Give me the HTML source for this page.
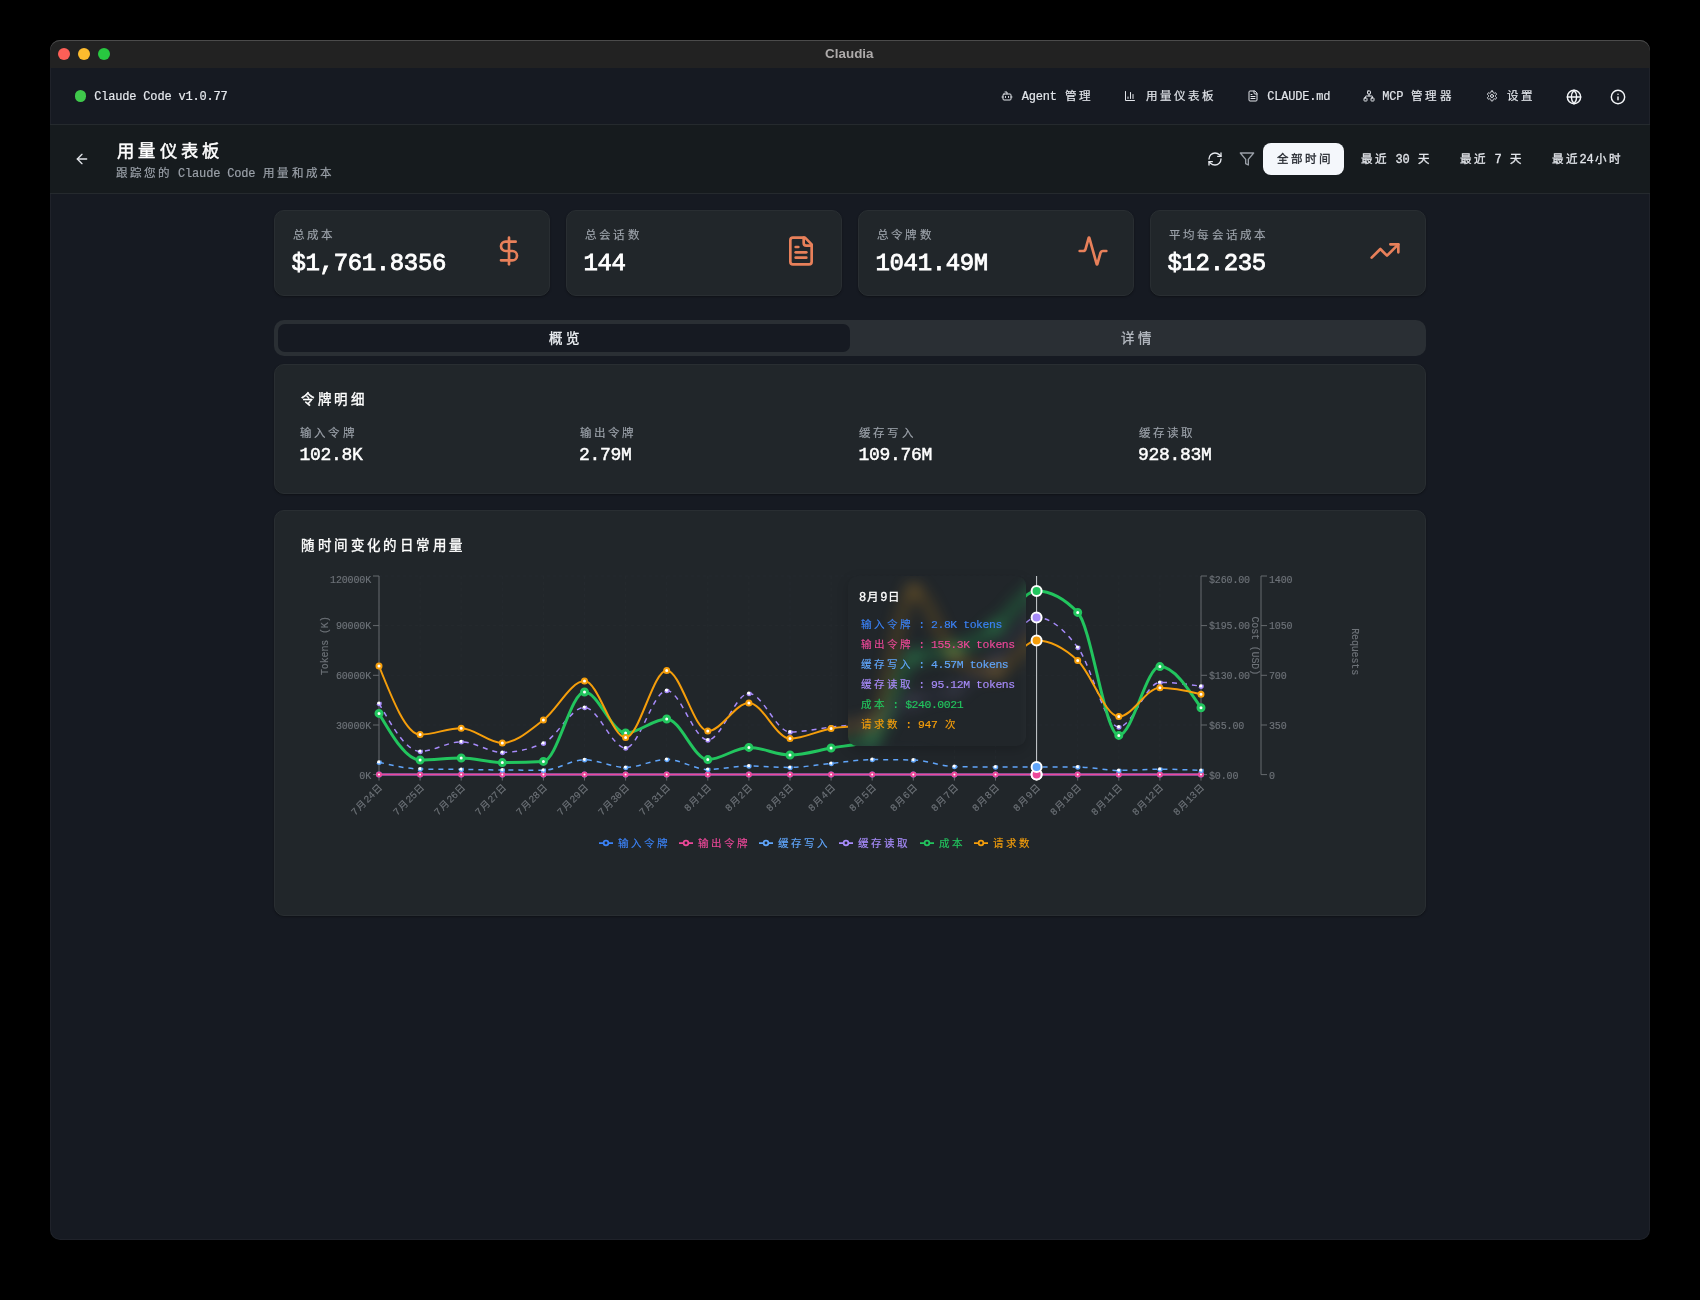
<!DOCTYPE html>
<html lang="zh-CN"><head><meta charset="utf-8"><title>Claudia</title><style>
html,body{margin:0;padding:0;background:#000;}
body{width:1700px;height:1300px;position:relative;overflow:hidden;font-family:"Liberation Mono",monospace;}
#app{position:absolute;left:0;top:0;width:1700px;height:1300px;will-change:transform;}
.win{position:absolute;left:50px;top:40px;width:1600px;height:1200px;border-radius:10px;background:#161a22;box-shadow:inset 0 0 0 1px rgba(255,255,255,.04);}
.b{position:absolute;box-sizing:border-box;}
.ic{position:absolute;display:block;overflow:visible;}
.chart{position:absolute;left:0;top:0;}
.title{position:absolute;transform:translateX(-50%);font:bold 13.4px/20px "Liberation Sans",sans-serif;color:#aeabab;white-space:nowrap;}
.t{position:absolute;white-space:nowrap;height:20px;line-height:20px;font-family:"Liberation Mono",monospace;--k:1.04;--ls:-0.039;font-size:calc(var(--f)*var(--k));letter-spacing:calc(var(--f)*var(--ls));}
.t .c{display:inline-block;width:calc(var(--f)*1.177);text-align:center;font-size:calc(var(--f)*.96);line-height:0;letter-spacing:0;}
.tip{position:absolute;border-radius:9px;background:#21262a;overflow:hidden;box-shadow:0 4px 12px rgba(0,0,0,.18);}
.blur{position:absolute;display:block;filter:blur(8px);opacity:1;}
</style></head><body>
<div id="app">
<div class="win"></div>
<div class="b" style="left:50px;top:40px;width:1600px;height:28px;background:#222222;border-radius:10px 10px 0 0;box-shadow:inset 0 1px 0 #4b4b4b;"></div>
<div class="b" style="left:58.2px;top:48.2px;width:12px;height:12px;border-radius:50%;background:#fe5f57;"></div>
<div class="b" style="left:78.2px;top:48.2px;width:12px;height:12px;border-radius:50%;background:#febc2e;"></div>
<div class="b" style="left:98.2px;top:48.2px;width:12px;height:12px;border-radius:50%;background:#28c840;"></div>
<div class="title" style="left:849.3px;top:44px;">Claudia</div>
<div class="b" style="left:50px;top:125px;width:1600px;height:68px;background:#161b1e;"></div>
<div class="b" style="left:50px;top:124px;width:1600px;height:1px;background:#252a2e;"></div>
<div class="b" style="left:74.6px;top:90.4px;width:11.6px;height:11.6px;border-radius:50%;background:#3fc84b;"></div>
<div class="t" style="left:94.20px;top:87.003px;--f:12px;color:#e6e9ee;--k:1;--ls:-0.015;-webkit-text-stroke:0.18px currentColor;">Claude Code v1.0.77</div>
<svg class="ic" style="left:1000.70px;top:90.20px" width="12" height="12" viewBox="0 0 24 24" fill="none" stroke="#e2e5ea" stroke-width="2" stroke-linecap="round" stroke-linejoin="round"><path d="M12 8V4H8"/><rect width="16" height="12" x="4" y="8" rx="2"/><path d="M2 14h2"/><path d="M20 14h2"/><path d="M15 13v2"/><path d="M9 13v2"/></svg>
<div class="t" style="left:1021.70px;top:87.003px;--f:12px;color:#e2e5ea;--k:1;--ls:-0.015;-webkit-text-stroke:0.18px currentColor;">Agent <span class="c">管</span><span class="c">理</span></div>
<svg class="ic" style="left:1124.00px;top:90.20px" width="12" height="12" viewBox="0 0 24 24" fill="none" stroke="#e2e5ea" stroke-width="2" stroke-linecap="round" stroke-linejoin="round"><path d="M3 3v18h18"/><path d="M18 17V9"/><path d="M13 17V5"/><path d="M8 17v-3"/></svg>
<div class="t" style="left:1144.60px;top:87.003px;--f:12px;color:#e2e5ea;--k:1;--ls:-0.015;-webkit-text-stroke:0.18px currentColor;"><span class="c">用</span><span class="c">量</span><span class="c">仪</span><span class="c">表</span><span class="c">板</span></div>
<svg class="ic" style="left:1246.70px;top:90.20px" width="12" height="12" viewBox="0 0 24 24" fill="none" stroke="#e2e5ea" stroke-width="2" stroke-linecap="round" stroke-linejoin="round"><path d="M15 2H6a2 2 0 0 0-2 2v16a2 2 0 0 0 2 2h12a2 2 0 0 0 2-2V7Z"/><path d="M14 2v4a2 2 0 0 0 2 2h4"/><path d="M10 9H8"/><path d="M16 13H8"/><path d="M16 17H8"/></svg>
<div class="t" style="left:1267.20px;top:87.003px;--f:12px;color:#e2e5ea;--k:1;--ls:-0.015;-webkit-text-stroke:0.18px currentColor;">CLAUDE.md</div>
<svg class="ic" style="left:1362.70px;top:90.20px" width="12" height="12" viewBox="0 0 24 24" fill="none" stroke="#e2e5ea" stroke-width="2" stroke-linecap="round" stroke-linejoin="round"><rect x="16" y="16" width="6" height="6" rx="1"/><rect x="2" y="16" width="6" height="6" rx="1"/><rect x="9" y="2" width="6" height="6" rx="1"/><path d="M5 16v-3a1 1 0 0 1 1-1h12a1 1 0 0 1 1 1v3"/><path d="M12 12V8"/></svg>
<div class="t" style="left:1382.20px;top:87.003px;--f:12px;color:#e2e5ea;--k:1;--ls:-0.015;-webkit-text-stroke:0.18px currentColor;">MCP <span class="c">管</span><span class="c">理</span><span class="c">器</span></div>
<svg class="ic" style="left:1485.80px;top:90.20px" width="12" height="12" viewBox="0 0 24 24" fill="none" stroke="#e2e5ea" stroke-width="2" stroke-linecap="round" stroke-linejoin="round"><path d="M12.22 2h-.44a2 2 0 0 0-2 2v.18a2 2 0 0 1-1 1.73l-.43.25a2 2 0 0 1-2 0l-.15-.08a2 2 0 0 0-2.73.73l-.22.38a2 2 0 0 0 .73 2.73l.15.1a2 2 0 0 1 1 1.72v.51a2 2 0 0 1-1 1.74l-.15.09a2 2 0 0 0-.73 2.73l.22.38a2 2 0 0 0 2.73.73l.15-.08a2 2 0 0 1 2 0l.43.25a2 2 0 0 1 1 1.73V20a2 2 0 0 0 2 2h.44a2 2 0 0 0 2-2v-.18a2 2 0 0 1 1-1.73l.43-.25a2 2 0 0 1 2 0l.15.08a2 2 0 0 0 2.73-.73l.22-.39a2 2 0 0 0-.73-2.73l-.15-.08a2 2 0 0 1-1-1.74v-.5a2 2 0 0 1 1-1.74l.15-.09a2 2 0 0 0 .73-2.73l-.22-.38a2 2 0 0 0-2.73-.73l-.15.08a2 2 0 0 1-2 0l-.43-.25a2 2 0 0 1-1-1.73V4a2 2 0 0 0-2-2z"/><circle cx="12" cy="12" r="3"/></svg>
<div class="t" style="left:1506.30px;top:87.003px;--f:12px;color:#e2e5ea;--k:1;--ls:-0.015;-webkit-text-stroke:0.18px currentColor;"><span class="c">设</span><span class="c">置</span></div>
<svg class="ic" style="left:1565.80px;top:88.60px" width="16" height="16" viewBox="0 0 24 24" fill="none" stroke="#f4f6f9" stroke-width="2.15" stroke-linecap="round" stroke-linejoin="round"><circle cx="12" cy="12" r="10"/><path d="M12 2a14.5 14.5 0 0 0 0 20 14.5 14.5 0 0 0 0-20"/><path d="M2 12h20"/></svg>
<svg class="ic" style="left:1610.00px;top:88.60px" width="16" height="16" viewBox="0 0 24 24" fill="none" stroke="#f4f6f9" stroke-width="2.15" stroke-linecap="round" stroke-linejoin="round"><circle cx="12" cy="12" r="10"/><path d="M12 16v-4"/><path d="M12 8h.01"/></svg>
<div class="b" style="left:50px;top:193px;width:1600px;height:1px;background:#252a2e;"></div>
<svg class="ic" style="left:74.20px;top:151.30px" width="16" height="16" viewBox="0 0 24 24" fill="none" stroke="#e2e5ea" stroke-width="2" stroke-linecap="round" stroke-linejoin="round"><path d="m12 19-7-7 7-7"/><path d="M19 12H5"/></svg>
<div class="t" style="left:115.20px;top:142.013px;--f:18px;color:#ffffff;--k:1;--ls:-0.015;-webkit-text-stroke:0.47px currentColor;"><span class="c">用</span><span class="c">量</span><span class="c">仪</span><span class="c">表</span><span class="c">板</span></div>
<div class="t" style="left:114.60px;top:164.003px;--f:12px;color:#9ba1a9;--k:1;--ls:-0.015;-webkit-text-stroke:0.18px currentColor;"><span class="c">跟</span><span class="c">踪</span><span class="c">您</span><span class="c">的</span> Claude Code <span class="c">用</span><span class="c">量</span><span class="c">和</span><span class="c">成</span><span class="c">本</span></div>
<svg class="ic" style="left:1207.00px;top:151.20px" width="16" height="16" viewBox="0 0 24 24" fill="none" stroke="#e6e9ee" stroke-width="2" stroke-linecap="round" stroke-linejoin="round"><path d="M3 12a9 9 0 0 1 9-9 9.75 9.75 0 0 1 6.74 2.74L21 8"/><path d="M21 3v5h-5"/><path d="M21 12a9 9 0 0 1-9 9 9.75 9.75 0 0 1-6.74-2.74L3 16"/><path d="M8 16H3v5"/></svg>
<svg class="ic" style="left:1239.00px;top:151.20px" width="16" height="16" viewBox="0 0 24 24" fill="none" stroke="#9aa0a8" stroke-width="2" stroke-linecap="round" stroke-linejoin="round"><polygon points="22 3 2 3 10 12.46 10 19 14 21 14 12.46 22 3"/></svg>
<div class="b" style="left:1263px;top:143px;width:81px;height:32px;background:#f4f7fb;border-radius:8px;"></div>
<div class="t" style="left:1275.90px;top:150.003px;--f:12px;color:#1f232a;--k:1;--ls:-0.015;-webkit-text-stroke:0.29px currentColor;"><span class="c">全</span><span class="c">部</span><span class="c">时</span><span class="c">间</span></div>
<div class="t" style="left:1360.20px;top:150.003px;--f:12px;color:#e2e5ea;--k:1;--ls:-0.015;-webkit-text-stroke:0.29px currentColor;"><span class="c">最</span><span class="c">近</span> 30 <span class="c">天</span></div>
<div class="t" style="left:1459.30px;top:150.003px;--f:12px;color:#e2e5ea;--k:1;--ls:-0.015;-webkit-text-stroke:0.29px currentColor;"><span class="c">最</span><span class="c">近</span> 7 <span class="c">天</span></div>
<div class="t" style="left:1551.20px;top:150.003px;--f:12px;color:#e2e5ea;--k:1;--ls:-0.015;-webkit-text-stroke:0.29px currentColor;"><span class="c">最</span><span class="c">近</span>24<span class="c">小</span><span class="c">时</span></div>
<div class="b" style="left:274px;top:210px;width:276px;height:86px;background:#21262a;border:1px solid #292e32;border-radius:10px;box-shadow:0 1px 2px rgba(0,0,0,.35);"></div>
<div class="t" style="left:292.20px;top:226.003px;--f:12px;color:#9ba1a9;--k:1;--ls:-0.015;-webkit-text-stroke:0.18px currentColor;"><span class="c">总</span><span class="c">成</span><span class="c">本</span></div>
<div class="t" style="left:291.50px;top:254.007px;--f:24px;color:#ffffff;--k:1;--ls:-0.015;-webkit-text-stroke:0.82px currentColor;">$1,761.8356</div>
<svg class="ic" style="left:493.00px;top:235.00px" width="32" height="32" viewBox="0 0 24 24" fill="none" stroke="#e8805a" stroke-width="2" stroke-linecap="round" stroke-linejoin="round"><line x1="12" x2="12" y1="2" y2="22"/><path d="M17 5H9.5a3.5 3.5 0 0 0 0 7h5a3.5 3.5 0 0 1 0 7H6"/></svg>
<div class="b" style="left:566px;top:210px;width:276px;height:86px;background:#21262a;border:1px solid #292e32;border-radius:10px;box-shadow:0 1px 2px rgba(0,0,0,.35);"></div>
<div class="t" style="left:584.20px;top:226.003px;--f:12px;color:#9ba1a9;--k:1;--ls:-0.015;-webkit-text-stroke:0.18px currentColor;"><span class="c">总</span><span class="c">会</span><span class="c">话</span><span class="c">数</span></div>
<div class="t" style="left:583.50px;top:254.007px;--f:24px;color:#ffffff;--k:1;--ls:-0.015;-webkit-text-stroke:0.82px currentColor;">144</div>
<svg class="ic" style="left:785.00px;top:235.00px" width="32" height="32" viewBox="0 0 24 24" fill="none" stroke="#e8805a" stroke-width="2" stroke-linecap="round" stroke-linejoin="round"><path d="M15 2H6a2 2 0 0 0-2 2v16a2 2 0 0 0 2 2h12a2 2 0 0 0 2-2V7Z"/><path d="M14 2v4a2 2 0 0 0 2 2h4"/><path d="M10 9H8"/><path d="M16 13H8"/><path d="M16 17H8"/></svg>
<div class="b" style="left:858px;top:210px;width:276px;height:86px;background:#21262a;border:1px solid #292e32;border-radius:10px;box-shadow:0 1px 2px rgba(0,0,0,.35);"></div>
<div class="t" style="left:876.20px;top:226.003px;--f:12px;color:#9ba1a9;--k:1;--ls:-0.015;-webkit-text-stroke:0.18px currentColor;"><span class="c">总</span><span class="c">令</span><span class="c">牌</span><span class="c">数</span></div>
<div class="t" style="left:875.50px;top:254.007px;--f:24px;color:#ffffff;--k:1;--ls:-0.015;-webkit-text-stroke:0.82px currentColor;">1041.49M</div>
<svg class="ic" style="left:1077.00px;top:235.00px" width="32" height="32" viewBox="0 0 24 24" fill="none" stroke="#e8805a" stroke-width="2" stroke-linecap="round" stroke-linejoin="round"><path d="M22 12h-2.48a2 2 0 0 0-1.93 1.46l-2.35 8.36a.25.25 0 0 1-.48 0L9.24 2.18a.25.25 0 0 0-.48 0l-2.35 8.36A2 2 0 0 1 4.49 12H2"/></svg>
<div class="b" style="left:1150px;top:210px;width:276px;height:86px;background:#21262a;border:1px solid #292e32;border-radius:10px;box-shadow:0 1px 2px rgba(0,0,0,.35);"></div>
<div class="t" style="left:1168.20px;top:226.003px;--f:12px;color:#9ba1a9;--k:1;--ls:-0.015;-webkit-text-stroke:0.18px currentColor;"><span class="c">平</span><span class="c">均</span><span class="c">每</span><span class="c">会</span><span class="c">话</span><span class="c">成</span><span class="c">本</span></div>
<div class="t" style="left:1167.50px;top:254.007px;--f:24px;color:#ffffff;--k:1;--ls:-0.015;-webkit-text-stroke:0.82px currentColor;">$12.235</div>
<svg class="ic" style="left:1369.00px;top:235.00px" width="32" height="32" viewBox="0 0 24 24" fill="none" stroke="#e8805a" stroke-width="2" stroke-linecap="round" stroke-linejoin="round"><polyline points="22 7 13.5 15.5 8.5 10.5 2 17"/><polyline points="16 7 22 7 22 13"/></svg>
<div class="b" style="left:274px;top:320px;width:1152px;height:36px;background:#2a2f34;border-radius:10px;"></div>
<div class="b" style="left:278px;top:324px;width:572px;height:28px;background:#161a22;border-radius:7px;"></div>
<div class="t" style="left:564.00px;top:329.008px;--f:14px;color:#eef1f5;-webkit-text-stroke:0.34px currentColor;transform:translateX(-50%);"><span class="c">概</span><span class="c">览</span></div>
<div class="t" style="left:1136.00px;top:329.008px;--f:14px;color:#b4b9c0;-webkit-text-stroke:0.34px currentColor;transform:translateX(-50%);"><span class="c">详</span><span class="c">情</span></div>
<div class="b" style="left:274px;top:364px;width:1152px;height:130px;background:#21262a;border:1px solid #292e32;border-radius:10px;box-shadow:0 1px 2px rgba(0,0,0,.35);"></div>
<div class="t" style="left:299.40px;top:390.001px;--f:14px;color:#ffffff;--k:1;--ls:-0.015;-webkit-text-stroke:0.36px currentColor;"><span class="c">令</span><span class="c">牌</span><span class="c">明</span><span class="c">细</span></div>
<div class="t" style="left:299.20px;top:424.003px;--f:12px;color:#9ba1a9;--k:1;--ls:-0.015;-webkit-text-stroke:0.18px currentColor;"><span class="c">输</span><span class="c">入</span><span class="c">令</span><span class="c">牌</span></div>
<div class="t" style="left:299.40px;top:445.013px;--f:18px;color:#ffffff;--k:1;--ls:-0.015;-webkit-text-stroke:0.47px currentColor;">102.8K</div>
<div class="t" style="left:578.70px;top:424.003px;--f:12px;color:#9ba1a9;--k:1;--ls:-0.015;-webkit-text-stroke:0.18px currentColor;"><span class="c">输</span><span class="c">出</span><span class="c">令</span><span class="c">牌</span></div>
<div class="t" style="left:578.90px;top:445.013px;--f:18px;color:#ffffff;--k:1;--ls:-0.015;-webkit-text-stroke:0.47px currentColor;">2.79M</div>
<div class="t" style="left:858.20px;top:424.003px;--f:12px;color:#9ba1a9;--k:1;--ls:-0.015;-webkit-text-stroke:0.18px currentColor;"><span class="c">缓</span><span class="c">存</span><span class="c">写</span><span class="c">入</span></div>
<div class="t" style="left:858.40px;top:445.013px;--f:18px;color:#ffffff;--k:1;--ls:-0.015;-webkit-text-stroke:0.47px currentColor;">109.76M</div>
<div class="t" style="left:1137.70px;top:424.003px;--f:12px;color:#9ba1a9;--k:1;--ls:-0.015;-webkit-text-stroke:0.18px currentColor;"><span class="c">缓</span><span class="c">存</span><span class="c">读</span><span class="c">取</span></div>
<div class="t" style="left:1137.90px;top:445.013px;--f:18px;color:#ffffff;--k:1;--ls:-0.015;-webkit-text-stroke:0.47px currentColor;">928.83M</div>
<div class="b" style="left:274px;top:510px;width:1152px;height:406px;background:#21262a;border:1px solid #292e32;border-radius:10px;box-shadow:0 1px 2px rgba(0,0,0,.35);"></div>
<div class="t" style="left:299.40px;top:536.001px;--f:14px;color:#ffffff;--k:1;--ls:-0.015;-webkit-text-stroke:0.36px currentColor;"><span class="c">随</span><span class="c">时</span><span class="c">间</span><span class="c">变</span><span class="c">化</span><span class="c">的</span><span class="c">日</span><span class="c">常</span><span class="c">用</span><span class="c">量</span></div>
<svg class="chart" width="1700" height="1300" viewBox="0 0 1700 1300" fill="none"><g stroke="#2a2f34" stroke-width="1" stroke-dasharray="3 3" opacity="0.4"><path d="M379.0 576.0H1201.0"/><path d="M379.0 625.6H1201.0"/><path d="M379.0 675.3H1201.0"/><path d="M379.0 725.0H1201.0"/><path d="M379.0 774.6H1201.0"/><path d="M379.0 576.0V774.6"/><path d="M420.1 576.0V774.6"/><path d="M461.2 576.0V774.6"/><path d="M502.3 576.0V774.6"/><path d="M543.4 576.0V774.6"/><path d="M584.5 576.0V774.6"/><path d="M625.6 576.0V774.6"/><path d="M666.7 576.0V774.6"/><path d="M707.8 576.0V774.6"/><path d="M748.9 576.0V774.6"/><path d="M790.0 576.0V774.6"/><path d="M831.1 576.0V774.6"/><path d="M872.2 576.0V774.6"/><path d="M913.3 576.0V774.6"/><path d="M954.4 576.0V774.6"/><path d="M995.5 576.0V774.6"/><path d="M1036.6 576.0V774.6"/><path d="M1077.7 576.0V774.6"/><path d="M1118.8 576.0V774.6"/><path d="M1159.9 576.0V774.6"/><path d="M1201.0 576.0V774.6"/></g><g stroke="#666a6e" stroke-width="1"><path d="M379.0 576.0V774.6"/><path d="M1201.0 576.0V774.6"/><path d="M1261.0 576.0V774.6"/><path d="M379.0 576.0h-6"/><path d="M1201.0 576.0h6"/><path d="M1261.0 576.0h6"/><path d="M379.0 625.6h-6"/><path d="M1201.0 625.6h6"/><path d="M1261.0 625.6h6"/><path d="M379.0 675.3h-6"/><path d="M1201.0 675.3h6"/><path d="M1261.0 675.3h6"/><path d="M379.0 725.0h-6"/><path d="M1201.0 725.0h6"/><path d="M1261.0 725.0h6"/><path d="M379.0 774.6h-6"/><path d="M1201.0 774.6h6"/><path d="M1261.0 774.6h6"/><path d="M379.0 774.6v6"/><path d="M420.1 774.6v6"/><path d="M461.2 774.6v6"/><path d="M502.3 774.6v6"/><path d="M543.4 774.6v6"/><path d="M584.5 774.6v6"/><path d="M625.6 774.6v6"/><path d="M666.7 774.6v6"/><path d="M707.8 774.6v6"/><path d="M748.9 774.6v6"/><path d="M790.0 774.6v6"/><path d="M831.1 774.6v6"/><path d="M872.2 774.6v6"/><path d="M913.3 774.6v6"/><path d="M954.4 774.6v6"/><path d="M995.5 774.6v6"/><path d="M1036.6 774.6v6"/><path d="M1077.7 774.6v6"/><path d="M1118.8 774.6v6"/><path d="M1159.9 774.6v6"/><path d="M1201.0 774.6v6"/></g><path d="M1036.6 576.0V774.6" stroke="#cfd2d6" stroke-width="1"/><path d="M379.00,774.60C392.70,774.60,406.40,774.60,420.10,774.60C433.80,774.60,447.50,774.60,461.20,774.60C474.90,774.60,488.60,774.60,502.30,774.60C516.00,774.60,529.70,774.60,543.40,774.60C557.10,774.60,570.80,774.60,584.50,774.60C598.20,774.60,611.90,774.60,625.60,774.60C639.30,774.60,653.00,774.60,666.70,774.60C680.40,774.60,694.10,774.60,707.80,774.60C721.50,774.60,735.20,774.60,748.90,774.60C762.60,774.60,776.30,774.60,790.00,774.60C803.70,774.60,817.40,774.60,831.10,774.60C844.80,774.60,858.50,774.60,872.20,774.60C885.90,774.60,899.60,774.60,913.30,774.60C927.00,774.60,940.70,774.60,954.40,774.60C968.10,774.60,981.80,774.60,995.50,774.60C1009.20,774.60,1022.90,774.60,1036.60,774.60C1050.30,774.60,1064.00,774.60,1077.70,774.60C1091.40,774.60,1105.10,774.60,1118.80,774.60C1132.50,774.60,1146.20,774.60,1159.90,774.60C1173.60,774.60,1187.30,774.60,1201.00,774.60" stroke="#3b82f6" stroke-width="2" stroke-linecap="butt"/><g fill="#fff" stroke="#3b82f6" stroke-width="2"><circle cx="379.0" cy="774.6" r="2"/><circle cx="420.1" cy="774.6" r="2"/><circle cx="461.2" cy="774.6" r="2"/><circle cx="502.3" cy="774.6" r="2"/><circle cx="543.4" cy="774.6" r="2"/><circle cx="584.5" cy="774.6" r="2"/><circle cx="625.6" cy="774.6" r="2"/><circle cx="666.7" cy="774.6" r="2"/><circle cx="707.8" cy="774.6" r="2"/><circle cx="748.9" cy="774.6" r="2"/><circle cx="790.0" cy="774.6" r="2"/><circle cx="831.1" cy="774.6" r="2"/><circle cx="872.2" cy="774.6" r="2"/><circle cx="913.3" cy="774.6" r="2"/><circle cx="954.4" cy="774.6" r="2"/><circle cx="995.5" cy="774.6" r="2"/><circle cx="1036.6" cy="774.6" r="2"/><circle cx="1077.7" cy="774.6" r="2"/><circle cx="1118.8" cy="774.6" r="2"/><circle cx="1159.9" cy="774.6" r="2"/><circle cx="1201.0" cy="774.6" r="2"/></g><path d="M379.00,774.40C392.70,774.40,406.40,774.40,420.10,774.40C433.80,774.40,447.50,774.40,461.20,774.40C474.90,774.40,488.60,774.40,502.30,774.40C516.00,774.40,529.70,774.40,543.40,774.40C557.10,774.40,570.80,774.40,584.50,774.40C598.20,774.40,611.90,774.40,625.60,774.40C639.30,774.40,653.00,774.40,666.70,774.40C680.40,774.40,694.10,774.40,707.80,774.40C721.50,774.40,735.20,774.40,748.90,774.40C762.60,774.40,776.30,774.40,790.00,774.40C803.70,774.40,817.40,774.40,831.10,774.40C844.80,774.40,858.50,774.40,872.20,774.40C885.90,774.40,899.60,774.40,913.30,774.40C927.00,774.40,940.70,774.40,954.40,774.40C968.10,774.40,981.80,774.40,995.50,774.40C1009.20,774.40,1022.90,774.40,1036.60,774.40C1050.30,774.40,1064.00,774.40,1077.70,774.40C1091.40,774.40,1105.10,774.40,1118.80,774.40C1132.50,774.40,1146.20,774.40,1159.90,774.40C1173.60,774.40,1187.30,774.40,1201.00,774.40" stroke="#ec4899" stroke-width="2" stroke-linecap="butt"/><g fill="#fff" stroke="#ec4899" stroke-width="2"><circle cx="379.0" cy="774.4" r="2"/><circle cx="420.1" cy="774.4" r="2"/><circle cx="461.2" cy="774.4" r="2"/><circle cx="502.3" cy="774.4" r="2"/><circle cx="543.4" cy="774.4" r="2"/><circle cx="584.5" cy="774.4" r="2"/><circle cx="625.6" cy="774.4" r="2"/><circle cx="666.7" cy="774.4" r="2"/><circle cx="707.8" cy="774.4" r="2"/><circle cx="748.9" cy="774.4" r="2"/><circle cx="790.0" cy="774.4" r="2"/><circle cx="831.1" cy="774.4" r="2"/><circle cx="872.2" cy="774.4" r="2"/><circle cx="913.3" cy="774.4" r="2"/><circle cx="954.4" cy="774.4" r="2"/><circle cx="995.5" cy="774.4" r="2"/><circle cx="1036.6" cy="774.4" r="2"/><circle cx="1077.7" cy="774.4" r="2"/><circle cx="1118.8" cy="774.4" r="2"/><circle cx="1159.9" cy="774.4" r="2"/><circle cx="1201.0" cy="774.4" r="2"/></g><path d="M379.00,762.20C392.70,765.47,406.40,768.73,420.10,769.00C433.80,769.27,447.50,769.23,461.20,769.40C474.90,769.57,488.60,769.87,502.30,770.00C516.00,770.13,529.70,770.20,543.40,770.20C557.10,770.20,570.80,759.80,584.50,759.80C598.20,759.80,611.90,767.40,625.60,767.40C639.30,767.40,653.00,759.40,666.70,759.40C680.40,759.40,694.10,769.40,707.80,769.40C721.50,769.40,735.20,766.00,748.90,766.00C762.60,766.00,776.30,767.40,790.00,767.40C803.70,767.40,817.40,764.70,831.10,763.40C844.80,762.10,858.50,759.60,872.20,759.60C885.90,759.60,899.60,759.73,913.30,760.00C927.00,760.27,940.70,766.33,954.40,766.60C968.10,766.87,981.80,767.00,995.50,767.00C1009.20,767.00,1022.90,767.00,1036.60,767.00C1050.30,767.00,1064.00,767.00,1077.70,767.00C1091.40,767.00,1105.10,770.40,1118.80,770.40C1132.50,770.40,1146.20,769.20,1159.90,769.20C1173.60,769.20,1187.30,769.80,1201.00,770.40" stroke="#60a5fa" stroke-width="1.5" stroke-dasharray="5 5" stroke-linecap="butt"/><g fill="#fff" stroke="#60a5fa" stroke-width="1.5" stroke-dasharray="5 5"><circle cx="379.0" cy="762.2" r="2"/><circle cx="420.1" cy="769.0" r="2"/><circle cx="461.2" cy="769.4" r="2"/><circle cx="502.3" cy="770.0" r="2"/><circle cx="543.4" cy="770.2" r="2"/><circle cx="584.5" cy="759.8" r="2"/><circle cx="625.6" cy="767.4" r="2"/><circle cx="666.7" cy="759.4" r="2"/><circle cx="707.8" cy="769.4" r="2"/><circle cx="748.9" cy="766.0" r="2"/><circle cx="790.0" cy="767.4" r="2"/><circle cx="831.1" cy="763.4" r="2"/><circle cx="872.2" cy="759.6" r="2"/><circle cx="913.3" cy="760.0" r="2"/><circle cx="954.4" cy="766.6" r="2"/><circle cx="995.5" cy="767.0" r="2"/><circle cx="1036.6" cy="767.0" r="2"/><circle cx="1077.7" cy="767.0" r="2"/><circle cx="1118.8" cy="770.4" r="2"/><circle cx="1159.9" cy="769.2" r="2"/><circle cx="1201.0" cy="770.4" r="2"/></g><path d="M379.00,703.40C392.70,727.40,406.40,751.40,420.10,751.40C433.80,751.40,447.50,741.80,461.20,741.80C474.90,741.80,488.60,752.40,502.30,752.40C516.00,752.40,529.70,749.33,543.40,743.20C557.10,737.07,570.80,707.40,584.50,707.40C598.20,707.40,611.90,748.00,625.60,748.00C639.30,748.00,653.00,690.60,666.70,690.60C680.40,690.60,694.10,740.00,707.80,740.00C721.50,740.00,735.20,693.40,748.90,693.40C762.60,693.40,776.30,732.00,790.00,732.00C803.70,732.00,817.40,728.67,831.10,727.00C844.80,725.33,858.50,725.33,872.20,722.00C885.90,718.67,899.60,705.33,913.30,700.00C927.00,694.67,940.70,696.67,954.40,690.00C968.10,683.33,981.80,672.10,995.50,660.00C1009.20,647.90,1022.90,617.40,1036.60,617.40C1050.30,617.40,1064.00,629.13,1077.70,647.40C1091.40,665.67,1105.10,727.00,1118.80,727.00C1132.50,727.00,1146.20,682.40,1159.90,682.40C1173.60,682.40,1187.30,684.30,1201.00,686.20" stroke="#a78bfa" stroke-width="1.5" stroke-dasharray="5 5" stroke-linecap="butt"/><g fill="#fff" stroke="#a78bfa" stroke-width="1.5" stroke-dasharray="5 5"><circle cx="379.0" cy="703.4" r="2"/><circle cx="420.1" cy="751.4" r="2"/><circle cx="461.2" cy="741.8" r="2"/><circle cx="502.3" cy="752.4" r="2"/><circle cx="543.4" cy="743.2" r="2"/><circle cx="584.5" cy="707.4" r="2"/><circle cx="625.6" cy="748.0" r="2"/><circle cx="666.7" cy="690.6" r="2"/><circle cx="707.8" cy="740.0" r="2"/><circle cx="748.9" cy="693.4" r="2"/><circle cx="790.0" cy="732.0" r="2"/><circle cx="831.1" cy="727.0" r="2"/><circle cx="872.2" cy="722.0" r="2"/><circle cx="913.3" cy="700.0" r="2"/><circle cx="954.4" cy="690.0" r="2"/><circle cx="995.5" cy="660.0" r="2"/><circle cx="1036.6" cy="617.4" r="2"/><circle cx="1077.7" cy="647.4" r="2"/><circle cx="1118.8" cy="727.0" r="2"/><circle cx="1159.9" cy="682.4" r="2"/><circle cx="1201.0" cy="686.2" r="2"/></g><path d="M379.00,713.40C392.70,736.70,406.40,760.00,420.10,760.00C433.80,760.00,447.50,758.00,461.20,758.00C474.90,758.00,488.60,762.60,502.30,762.60C516.00,762.60,529.70,762.20,543.40,761.40C557.10,760.60,570.80,692.00,584.50,692.00C598.20,692.00,611.90,733.00,625.60,733.00C639.30,733.00,653.00,719.00,666.70,719.00C680.40,719.00,694.10,759.60,707.80,759.60C721.50,759.60,735.20,747.40,748.90,747.40C762.60,747.40,776.30,755.00,790.00,755.00C803.70,755.00,817.40,750.50,831.10,748.00C844.80,745.50,858.50,745.33,872.20,740.00C885.90,734.67,899.60,661.67,913.30,657.00C927.00,652.33,940.70,654.67,954.40,650.00C968.10,645.33,981.80,637.83,995.50,628.00C1009.20,618.17,1022.90,591.00,1036.60,591.00C1050.30,591.00,1064.00,598.13,1077.70,612.40C1091.40,626.67,1105.10,735.40,1118.80,735.40C1132.50,735.40,1146.20,666.60,1159.90,666.60C1173.60,666.60,1187.30,687.20,1201.00,707.80" stroke="#22c55e" stroke-width="3" stroke-linecap="butt"/><g fill="#fff" stroke="#22c55e" stroke-width="3"><circle cx="379.0" cy="713.4" r="3"/><circle cx="420.1" cy="760.0" r="3"/><circle cx="461.2" cy="758.0" r="3"/><circle cx="502.3" cy="762.6" r="3"/><circle cx="543.4" cy="761.4" r="3"/><circle cx="584.5" cy="692.0" r="3"/><circle cx="625.6" cy="733.0" r="3"/><circle cx="666.7" cy="719.0" r="3"/><circle cx="707.8" cy="759.6" r="3"/><circle cx="748.9" cy="747.4" r="3"/><circle cx="790.0" cy="755.0" r="3"/><circle cx="831.1" cy="748.0" r="3"/><circle cx="872.2" cy="740.0" r="3"/><circle cx="913.3" cy="657.0" r="3"/><circle cx="954.4" cy="650.0" r="3"/><circle cx="995.5" cy="628.0" r="3"/><circle cx="1036.6" cy="591.0" r="3"/><circle cx="1077.7" cy="612.4" r="3"/><circle cx="1118.8" cy="735.4" r="3"/><circle cx="1159.9" cy="666.6" r="3"/><circle cx="1201.0" cy="707.8" r="3"/></g><path d="M379.00,666.00C392.70,700.30,406.40,734.60,420.10,734.60C433.80,734.60,447.50,728.20,461.20,728.20C474.90,728.20,488.60,743.00,502.30,743.00C516.00,743.00,529.70,730.33,543.40,720.00C557.10,709.67,570.80,681.00,584.50,681.00C598.20,681.00,611.90,737.60,625.60,737.60C639.30,737.60,653.00,670.40,666.70,670.40C680.40,670.40,694.10,731.00,707.80,731.00C721.50,731.00,735.20,703.00,748.90,703.00C762.60,703.00,776.30,738.60,790.00,738.60C803.70,738.60,817.40,730.83,831.10,728.40C844.80,725.97,858.50,726.93,872.20,724.00C885.90,721.07,899.60,590.00,913.30,590.00C927.00,590.00,940.70,643.67,954.40,655.00C968.10,666.33,981.80,672.00,995.50,672.00C1009.20,672.00,1022.90,640.40,1036.60,640.40C1050.30,640.40,1064.00,647.70,1077.70,660.40C1091.40,673.10,1105.10,716.60,1118.80,716.60C1132.50,716.60,1146.20,687.80,1159.90,687.80C1173.60,687.80,1187.30,691.00,1201.00,694.20" stroke="#f59e0b" stroke-width="2" stroke-linecap="butt"/><g fill="#fff" stroke="#f59e0b" stroke-width="2"><circle cx="379.0" cy="666.0" r="2.5"/><circle cx="420.1" cy="734.6" r="2.5"/><circle cx="461.2" cy="728.2" r="2.5"/><circle cx="502.3" cy="743.0" r="2.5"/><circle cx="543.4" cy="720.0" r="2.5"/><circle cx="584.5" cy="681.0" r="2.5"/><circle cx="625.6" cy="737.6" r="2.5"/><circle cx="666.7" cy="670.4" r="2.5"/><circle cx="707.8" cy="731.0" r="2.5"/><circle cx="748.9" cy="703.0" r="2.5"/><circle cx="790.0" cy="738.6" r="2.5"/><circle cx="831.1" cy="728.4" r="2.5"/><circle cx="872.2" cy="724.0" r="2.5"/><circle cx="913.3" cy="590.0" r="2.5"/><circle cx="954.4" cy="655.0" r="2.5"/><circle cx="995.5" cy="672.0" r="2.5"/><circle cx="1036.6" cy="640.4" r="2.5"/><circle cx="1077.7" cy="660.4" r="2.5"/><circle cx="1118.8" cy="716.6" r="2.5"/><circle cx="1159.9" cy="687.8" r="2.5"/><circle cx="1201.0" cy="694.2" r="2.5"/></g><circle cx="1036.6" cy="774.6" r="5" fill="#3b82f6" stroke="#fff" stroke-width="2"/><circle cx="1036.6" cy="774.4" r="5" fill="#ec4899" stroke="#fff" stroke-width="2"/><circle cx="1036.6" cy="767.0" r="5" fill="#60a5fa" stroke="#fff" stroke-width="2"/><circle cx="1036.6" cy="617.4" r="5" fill="#a78bfa" stroke="#fff" stroke-width="2"/><circle cx="1036.6" cy="591.0" r="5" fill="#22c55e" stroke="#fff" stroke-width="2"/><circle cx="1036.6" cy="640.4" r="5" fill="#f59e0b" stroke="#fff" stroke-width="2"/></svg>
<div class="t" style="left:371.00px;top:570.602px;--f:10px;color:#6e7379;--k:1;--ls:-0.015;-webkit-text-stroke:0.15px currentColor;transform:translateX(-100%);">120000K</div>
<div class="t" style="left:1209.00px;top:570.602px;--f:10px;color:#6e7379;--k:1;--ls:-0.015;-webkit-text-stroke:0.15px currentColor;">$260.00</div>
<div class="t" style="left:1269.00px;top:570.602px;--f:10px;color:#6e7379;--k:1;--ls:-0.015;-webkit-text-stroke:0.15px currentColor;">1400</div>
<div class="t" style="left:371.00px;top:617.215px;--f:10px;color:#6e7379;--k:1;--ls:-0.015;-webkit-text-stroke:0.15px currentColor;transform:translateX(-100%);">90000K</div>
<div class="t" style="left:1209.00px;top:617.215px;--f:10px;color:#6e7379;--k:1;--ls:-0.015;-webkit-text-stroke:0.15px currentColor;">$195.00</div>
<div class="t" style="left:1269.00px;top:617.215px;--f:10px;color:#6e7379;--k:1;--ls:-0.015;-webkit-text-stroke:0.15px currentColor;">1050</div>
<div class="t" style="left:371.00px;top:666.852px;--f:10px;color:#6e7379;--k:1;--ls:-0.015;-webkit-text-stroke:0.15px currentColor;transform:translateX(-100%);">60000K</div>
<div class="t" style="left:1209.00px;top:666.852px;--f:10px;color:#6e7379;--k:1;--ls:-0.015;-webkit-text-stroke:0.15px currentColor;">$130.00</div>
<div class="t" style="left:1269.00px;top:666.852px;--f:10px;color:#6e7379;--k:1;--ls:-0.015;-webkit-text-stroke:0.15px currentColor;">700</div>
<div class="t" style="left:371.00px;top:716.505px;--f:10px;color:#6e7379;--k:1;--ls:-0.015;-webkit-text-stroke:0.15px currentColor;transform:translateX(-100%);">30000K</div>
<div class="t" style="left:1209.00px;top:716.505px;--f:10px;color:#6e7379;--k:1;--ls:-0.015;-webkit-text-stroke:0.15px currentColor;">$65.00</div>
<div class="t" style="left:1269.00px;top:716.505px;--f:10px;color:#6e7379;--k:1;--ls:-0.015;-webkit-text-stroke:0.15px currentColor;">350</div>
<div class="t" style="left:371.00px;top:766.755px;--f:10px;color:#6e7379;--k:1;--ls:-0.015;-webkit-text-stroke:0.15px currentColor;transform:translateX(-100%);">0K</div>
<div class="t" style="left:1209.00px;top:766.755px;--f:10px;color:#6e7379;--k:1;--ls:-0.015;-webkit-text-stroke:0.15px currentColor;">$0.00</div>
<div class="t" style="left:1269.00px;top:766.755px;--f:10px;color:#6e7379;--k:1;--ls:-0.015;-webkit-text-stroke:0.15px currentColor;">0</div>
<div class="t" style="left:327.50px;top:663.312px;--f:10px;color:#6e7379;--k:1;--ls:-0.015;-webkit-text-stroke:0.15px currentColor;transform:rotate(-90deg);transform-origin:0 11.988px;">Tokens (K)</div>
<div class="t" style="left:1252.00px;top:663.312px;--f:10px;color:#6e7379;--k:1;--ls:-0.015;-webkit-text-stroke:0.15px currentColor;transform:translateX(-100%) rotate(90deg);transform-origin:100% 11.988px;">Cost (USD)</div>
<div class="t" style="left:1352.30px;top:663.312px;--f:10px;color:#6e7379;--k:1;--ls:-0.015;-webkit-text-stroke:0.15px currentColor;transform:translateX(-100%) rotate(90deg);transform-origin:100% 11.988px;">Requests</div>
<div class="t" style="left:384.40px;top:775.408px;--f:10px;color:#6e7379;--k:1;--ls:-0.015;-webkit-text-stroke:0.15px currentColor;transform:translateX(-100%) rotate(-45deg);transform-origin:100% 11.992px;">7<span class="c">月</span>24<span class="c">日</span></div>
<div class="t" style="left:425.50px;top:775.408px;--f:10px;color:#6e7379;--k:1;--ls:-0.015;-webkit-text-stroke:0.15px currentColor;transform:translateX(-100%) rotate(-45deg);transform-origin:100% 11.992px;">7<span class="c">月</span>25<span class="c">日</span></div>
<div class="t" style="left:466.60px;top:775.408px;--f:10px;color:#6e7379;--k:1;--ls:-0.015;-webkit-text-stroke:0.15px currentColor;transform:translateX(-100%) rotate(-45deg);transform-origin:100% 11.992px;">7<span class="c">月</span>26<span class="c">日</span></div>
<div class="t" style="left:507.70px;top:775.408px;--f:10px;color:#6e7379;--k:1;--ls:-0.015;-webkit-text-stroke:0.15px currentColor;transform:translateX(-100%) rotate(-45deg);transform-origin:100% 11.992px;">7<span class="c">月</span>27<span class="c">日</span></div>
<div class="t" style="left:548.80px;top:775.408px;--f:10px;color:#6e7379;--k:1;--ls:-0.015;-webkit-text-stroke:0.15px currentColor;transform:translateX(-100%) rotate(-45deg);transform-origin:100% 11.992px;">7<span class="c">月</span>28<span class="c">日</span></div>
<div class="t" style="left:589.90px;top:775.408px;--f:10px;color:#6e7379;--k:1;--ls:-0.015;-webkit-text-stroke:0.15px currentColor;transform:translateX(-100%) rotate(-45deg);transform-origin:100% 11.992px;">7<span class="c">月</span>29<span class="c">日</span></div>
<div class="t" style="left:631.00px;top:775.408px;--f:10px;color:#6e7379;--k:1;--ls:-0.015;-webkit-text-stroke:0.15px currentColor;transform:translateX(-100%) rotate(-45deg);transform-origin:100% 11.992px;">7<span class="c">月</span>30<span class="c">日</span></div>
<div class="t" style="left:672.10px;top:775.408px;--f:10px;color:#6e7379;--k:1;--ls:-0.015;-webkit-text-stroke:0.15px currentColor;transform:translateX(-100%) rotate(-45deg);transform-origin:100% 11.992px;">7<span class="c">月</span>31<span class="c">日</span></div>
<div class="t" style="left:713.20px;top:775.408px;--f:10px;color:#6e7379;--k:1;--ls:-0.015;-webkit-text-stroke:0.15px currentColor;transform:translateX(-100%) rotate(-45deg);transform-origin:100% 11.992px;">8<span class="c">月</span>1<span class="c">日</span></div>
<div class="t" style="left:754.30px;top:775.408px;--f:10px;color:#6e7379;--k:1;--ls:-0.015;-webkit-text-stroke:0.15px currentColor;transform:translateX(-100%) rotate(-45deg);transform-origin:100% 11.992px;">8<span class="c">月</span>2<span class="c">日</span></div>
<div class="t" style="left:795.40px;top:775.408px;--f:10px;color:#6e7379;--k:1;--ls:-0.015;-webkit-text-stroke:0.15px currentColor;transform:translateX(-100%) rotate(-45deg);transform-origin:100% 11.992px;">8<span class="c">月</span>3<span class="c">日</span></div>
<div class="t" style="left:836.50px;top:775.408px;--f:10px;color:#6e7379;--k:1;--ls:-0.015;-webkit-text-stroke:0.15px currentColor;transform:translateX(-100%) rotate(-45deg);transform-origin:100% 11.992px;">8<span class="c">月</span>4<span class="c">日</span></div>
<div class="t" style="left:877.60px;top:775.408px;--f:10px;color:#6e7379;--k:1;--ls:-0.015;-webkit-text-stroke:0.15px currentColor;transform:translateX(-100%) rotate(-45deg);transform-origin:100% 11.992px;">8<span class="c">月</span>5<span class="c">日</span></div>
<div class="t" style="left:918.70px;top:775.408px;--f:10px;color:#6e7379;--k:1;--ls:-0.015;-webkit-text-stroke:0.15px currentColor;transform:translateX(-100%) rotate(-45deg);transform-origin:100% 11.992px;">8<span class="c">月</span>6<span class="c">日</span></div>
<div class="t" style="left:959.80px;top:775.408px;--f:10px;color:#6e7379;--k:1;--ls:-0.015;-webkit-text-stroke:0.15px currentColor;transform:translateX(-100%) rotate(-45deg);transform-origin:100% 11.992px;">8<span class="c">月</span>7<span class="c">日</span></div>
<div class="t" style="left:1000.90px;top:775.408px;--f:10px;color:#6e7379;--k:1;--ls:-0.015;-webkit-text-stroke:0.15px currentColor;transform:translateX(-100%) rotate(-45deg);transform-origin:100% 11.992px;">8<span class="c">月</span>8<span class="c">日</span></div>
<div class="t" style="left:1042.00px;top:775.408px;--f:10px;color:#6e7379;--k:1;--ls:-0.015;-webkit-text-stroke:0.15px currentColor;transform:translateX(-100%) rotate(-45deg);transform-origin:100% 11.992px;">8<span class="c">月</span>9<span class="c">日</span></div>
<div class="t" style="left:1083.10px;top:775.408px;--f:10px;color:#6e7379;--k:1;--ls:-0.015;-webkit-text-stroke:0.15px currentColor;transform:translateX(-100%) rotate(-45deg);transform-origin:100% 11.992px;">8<span class="c">月</span>10<span class="c">日</span></div>
<div class="t" style="left:1124.20px;top:775.408px;--f:10px;color:#6e7379;--k:1;--ls:-0.015;-webkit-text-stroke:0.15px currentColor;transform:translateX(-100%) rotate(-45deg);transform-origin:100% 11.992px;">8<span class="c">月</span>11<span class="c">日</span></div>
<div class="t" style="left:1165.30px;top:775.408px;--f:10px;color:#6e7379;--k:1;--ls:-0.015;-webkit-text-stroke:0.15px currentColor;transform:translateX(-100%) rotate(-45deg);transform-origin:100% 11.992px;">8<span class="c">月</span>12<span class="c">日</span></div>
<div class="t" style="left:1206.40px;top:775.408px;--f:10px;color:#6e7379;--k:1;--ls:-0.015;-webkit-text-stroke:0.15px currentColor;transform:translateX(-100%) rotate(-45deg);transform-origin:100% 11.992px;">8<span class="c">月</span>13<span class="c">日</span></div>
<svg class="ic" style="left:598.9px;top:836.1px" width="14" height="14" viewBox="0 0 32 32"><path stroke-width="4" fill="none" stroke="#3b82f6" d="M0,16h10.666666666666666A5.333333333333333,5.333333333333333,0,1,1,21.333333333333332,16H32M21.333333333333332,16A5.333333333333333,5.333333333333333,0,1,1,10.666666666666666,16"/></svg>
<div class="t" style="left:617.20px;top:834.206px;--f:11px;color:#3b82f6;-webkit-text-stroke:0.16px currentColor;"><span class="c">输</span><span class="c">入</span><span class="c">令</span><span class="c">牌</span></div>
<svg class="ic" style="left:678.7px;top:836.1px" width="14" height="14" viewBox="0 0 32 32"><path stroke-width="4" fill="none" stroke="#ec4899" d="M0,16h10.666666666666666A5.333333333333333,5.333333333333333,0,1,1,21.333333333333332,16H32M21.333333333333332,16A5.333333333333333,5.333333333333333,0,1,1,10.666666666666666,16"/></svg>
<div class="t" style="left:697.00px;top:834.206px;--f:11px;color:#ec4899;-webkit-text-stroke:0.16px currentColor;"><span class="c">输</span><span class="c">出</span><span class="c">令</span><span class="c">牌</span></div>
<svg class="ic" style="left:758.6px;top:836.1px" width="14" height="14" viewBox="0 0 32 32"><path stroke-width="4" fill="none" stroke="#60a5fa" d="M0,16h10.666666666666666A5.333333333333333,5.333333333333333,0,1,1,21.333333333333332,16H32M21.333333333333332,16A5.333333333333333,5.333333333333333,0,1,1,10.666666666666666,16"/></svg>
<div class="t" style="left:776.90px;top:834.206px;--f:11px;color:#60a5fa;-webkit-text-stroke:0.16px currentColor;"><span class="c">缓</span><span class="c">存</span><span class="c">写</span><span class="c">入</span></div>
<svg class="ic" style="left:838.9px;top:836.1px" width="14" height="14" viewBox="0 0 32 32"><path stroke-width="4" fill="none" stroke="#a78bfa" d="M0,16h10.666666666666666A5.333333333333333,5.333333333333333,0,1,1,21.333333333333332,16H32M21.333333333333332,16A5.333333333333333,5.333333333333333,0,1,1,10.666666666666666,16"/></svg>
<div class="t" style="left:857.20px;top:834.206px;--f:11px;color:#a78bfa;-webkit-text-stroke:0.16px currentColor;"><span class="c">缓</span><span class="c">存</span><span class="c">读</span><span class="c">取</span></div>
<svg class="ic" style="left:919.5px;top:836.1px" width="14" height="14" viewBox="0 0 32 32"><path stroke-width="4" fill="none" stroke="#22c55e" d="M0,16h10.666666666666666A5.333333333333333,5.333333333333333,0,1,1,21.333333333333332,16H32M21.333333333333332,16A5.333333333333333,5.333333333333333,0,1,1,10.666666666666666,16"/></svg>
<div class="t" style="left:937.80px;top:834.206px;--f:11px;color:#22c55e;-webkit-text-stroke:0.16px currentColor;"><span class="c">成</span><span class="c">本</span></div>
<svg class="ic" style="left:973.7px;top:836.1px" width="14" height="14" viewBox="0 0 32 32"><path stroke-width="4" fill="none" stroke="#f59e0b" d="M0,16h10.666666666666666A5.333333333333333,5.333333333333333,0,1,1,21.333333333333332,16H32M21.333333333333332,16A5.333333333333333,5.333333333333333,0,1,1,10.666666666666666,16"/></svg>
<div class="t" style="left:992.00px;top:834.206px;--f:11px;color:#f59e0b;-webkit-text-stroke:0.16px currentColor;"><span class="c">请</span><span class="c">求</span><span class="c">数</span></div>
<div class="tip" style="left:847.5px;top:576px;width:178px;height:170px;"><svg class="blur" style="left:-47.5px;top:-46px" width="275" height="270" viewBox="800 530 275 270" fill="none"><path d="M1036.6 576.0V774.6" stroke="#cfd2d6" stroke-width="1"/><path d="M379.00,774.60C392.70,774.60,406.40,774.60,420.10,774.60C433.80,774.60,447.50,774.60,461.20,774.60C474.90,774.60,488.60,774.60,502.30,774.60C516.00,774.60,529.70,774.60,543.40,774.60C557.10,774.60,570.80,774.60,584.50,774.60C598.20,774.60,611.90,774.60,625.60,774.60C639.30,774.60,653.00,774.60,666.70,774.60C680.40,774.60,694.10,774.60,707.80,774.60C721.50,774.60,735.20,774.60,748.90,774.60C762.60,774.60,776.30,774.60,790.00,774.60C803.70,774.60,817.40,774.60,831.10,774.60C844.80,774.60,858.50,774.60,872.20,774.60C885.90,774.60,899.60,774.60,913.30,774.60C927.00,774.60,940.70,774.60,954.40,774.60C968.10,774.60,981.80,774.60,995.50,774.60C1009.20,774.60,1022.90,774.60,1036.60,774.60C1050.30,774.60,1064.00,774.60,1077.70,774.60C1091.40,774.60,1105.10,774.60,1118.80,774.60C1132.50,774.60,1146.20,774.60,1159.90,774.60C1173.60,774.60,1187.30,774.60,1201.00,774.60" stroke="#3b82f6" stroke-width="2" stroke-linecap="butt"/><g fill="#fff" stroke="#3b82f6" stroke-width="2"><circle cx="379.0" cy="774.6" r="2"/><circle cx="420.1" cy="774.6" r="2"/><circle cx="461.2" cy="774.6" r="2"/><circle cx="502.3" cy="774.6" r="2"/><circle cx="543.4" cy="774.6" r="2"/><circle cx="584.5" cy="774.6" r="2"/><circle cx="625.6" cy="774.6" r="2"/><circle cx="666.7" cy="774.6" r="2"/><circle cx="707.8" cy="774.6" r="2"/><circle cx="748.9" cy="774.6" r="2"/><circle cx="790.0" cy="774.6" r="2"/><circle cx="831.1" cy="774.6" r="2"/><circle cx="872.2" cy="774.6" r="2"/><circle cx="913.3" cy="774.6" r="2"/><circle cx="954.4" cy="774.6" r="2"/><circle cx="995.5" cy="774.6" r="2"/><circle cx="1036.6" cy="774.6" r="2"/><circle cx="1077.7" cy="774.6" r="2"/><circle cx="1118.8" cy="774.6" r="2"/><circle cx="1159.9" cy="774.6" r="2"/><circle cx="1201.0" cy="774.6" r="2"/></g><path d="M379.00,774.40C392.70,774.40,406.40,774.40,420.10,774.40C433.80,774.40,447.50,774.40,461.20,774.40C474.90,774.40,488.60,774.40,502.30,774.40C516.00,774.40,529.70,774.40,543.40,774.40C557.10,774.40,570.80,774.40,584.50,774.40C598.20,774.40,611.90,774.40,625.60,774.40C639.30,774.40,653.00,774.40,666.70,774.40C680.40,774.40,694.10,774.40,707.80,774.40C721.50,774.40,735.20,774.40,748.90,774.40C762.60,774.40,776.30,774.40,790.00,774.40C803.70,774.40,817.40,774.40,831.10,774.40C844.80,774.40,858.50,774.40,872.20,774.40C885.90,774.40,899.60,774.40,913.30,774.40C927.00,774.40,940.70,774.40,954.40,774.40C968.10,774.40,981.80,774.40,995.50,774.40C1009.20,774.40,1022.90,774.40,1036.60,774.40C1050.30,774.40,1064.00,774.40,1077.70,774.40C1091.40,774.40,1105.10,774.40,1118.80,774.40C1132.50,774.40,1146.20,774.40,1159.90,774.40C1173.60,774.40,1187.30,774.40,1201.00,774.40" stroke="#ec4899" stroke-width="2" stroke-linecap="butt"/><g fill="#fff" stroke="#ec4899" stroke-width="2"><circle cx="379.0" cy="774.4" r="2"/><circle cx="420.1" cy="774.4" r="2"/><circle cx="461.2" cy="774.4" r="2"/><circle cx="502.3" cy="774.4" r="2"/><circle cx="543.4" cy="774.4" r="2"/><circle cx="584.5" cy="774.4" r="2"/><circle cx="625.6" cy="774.4" r="2"/><circle cx="666.7" cy="774.4" r="2"/><circle cx="707.8" cy="774.4" r="2"/><circle cx="748.9" cy="774.4" r="2"/><circle cx="790.0" cy="774.4" r="2"/><circle cx="831.1" cy="774.4" r="2"/><circle cx="872.2" cy="774.4" r="2"/><circle cx="913.3" cy="774.4" r="2"/><circle cx="954.4" cy="774.4" r="2"/><circle cx="995.5" cy="774.4" r="2"/><circle cx="1036.6" cy="774.4" r="2"/><circle cx="1077.7" cy="774.4" r="2"/><circle cx="1118.8" cy="774.4" r="2"/><circle cx="1159.9" cy="774.4" r="2"/><circle cx="1201.0" cy="774.4" r="2"/></g><path d="M379.00,762.20C392.70,765.47,406.40,768.73,420.10,769.00C433.80,769.27,447.50,769.23,461.20,769.40C474.90,769.57,488.60,769.87,502.30,770.00C516.00,770.13,529.70,770.20,543.40,770.20C557.10,770.20,570.80,759.80,584.50,759.80C598.20,759.80,611.90,767.40,625.60,767.40C639.30,767.40,653.00,759.40,666.70,759.40C680.40,759.40,694.10,769.40,707.80,769.40C721.50,769.40,735.20,766.00,748.90,766.00C762.60,766.00,776.30,767.40,790.00,767.40C803.70,767.40,817.40,764.70,831.10,763.40C844.80,762.10,858.50,759.60,872.20,759.60C885.90,759.60,899.60,759.73,913.30,760.00C927.00,760.27,940.70,766.33,954.40,766.60C968.10,766.87,981.80,767.00,995.50,767.00C1009.20,767.00,1022.90,767.00,1036.60,767.00C1050.30,767.00,1064.00,767.00,1077.70,767.00C1091.40,767.00,1105.10,770.40,1118.80,770.40C1132.50,770.40,1146.20,769.20,1159.90,769.20C1173.60,769.20,1187.30,769.80,1201.00,770.40" stroke="#60a5fa" stroke-width="1.5" stroke-dasharray="5 5" stroke-linecap="butt"/><g fill="#fff" stroke="#60a5fa" stroke-width="1.5" stroke-dasharray="5 5"><circle cx="379.0" cy="762.2" r="2"/><circle cx="420.1" cy="769.0" r="2"/><circle cx="461.2" cy="769.4" r="2"/><circle cx="502.3" cy="770.0" r="2"/><circle cx="543.4" cy="770.2" r="2"/><circle cx="584.5" cy="759.8" r="2"/><circle cx="625.6" cy="767.4" r="2"/><circle cx="666.7" cy="759.4" r="2"/><circle cx="707.8" cy="769.4" r="2"/><circle cx="748.9" cy="766.0" r="2"/><circle cx="790.0" cy="767.4" r="2"/><circle cx="831.1" cy="763.4" r="2"/><circle cx="872.2" cy="759.6" r="2"/><circle cx="913.3" cy="760.0" r="2"/><circle cx="954.4" cy="766.6" r="2"/><circle cx="995.5" cy="767.0" r="2"/><circle cx="1036.6" cy="767.0" r="2"/><circle cx="1077.7" cy="767.0" r="2"/><circle cx="1118.8" cy="770.4" r="2"/><circle cx="1159.9" cy="769.2" r="2"/><circle cx="1201.0" cy="770.4" r="2"/></g><path d="M379.00,703.40C392.70,727.40,406.40,751.40,420.10,751.40C433.80,751.40,447.50,741.80,461.20,741.80C474.90,741.80,488.60,752.40,502.30,752.40C516.00,752.40,529.70,749.33,543.40,743.20C557.10,737.07,570.80,707.40,584.50,707.40C598.20,707.40,611.90,748.00,625.60,748.00C639.30,748.00,653.00,690.60,666.70,690.60C680.40,690.60,694.10,740.00,707.80,740.00C721.50,740.00,735.20,693.40,748.90,693.40C762.60,693.40,776.30,732.00,790.00,732.00C803.70,732.00,817.40,728.67,831.10,727.00C844.80,725.33,858.50,725.33,872.20,722.00C885.90,718.67,899.60,705.33,913.30,700.00C927.00,694.67,940.70,696.67,954.40,690.00C968.10,683.33,981.80,672.10,995.50,660.00C1009.20,647.90,1022.90,617.40,1036.60,617.40C1050.30,617.40,1064.00,629.13,1077.70,647.40C1091.40,665.67,1105.10,727.00,1118.80,727.00C1132.50,727.00,1146.20,682.40,1159.90,682.40C1173.60,682.40,1187.30,684.30,1201.00,686.20" stroke="#a78bfa" stroke-width="1.5" stroke-dasharray="5 5" stroke-linecap="butt"/><g fill="#fff" stroke="#a78bfa" stroke-width="1.5" stroke-dasharray="5 5"><circle cx="379.0" cy="703.4" r="2"/><circle cx="420.1" cy="751.4" r="2"/><circle cx="461.2" cy="741.8" r="2"/><circle cx="502.3" cy="752.4" r="2"/><circle cx="543.4" cy="743.2" r="2"/><circle cx="584.5" cy="707.4" r="2"/><circle cx="625.6" cy="748.0" r="2"/><circle cx="666.7" cy="690.6" r="2"/><circle cx="707.8" cy="740.0" r="2"/><circle cx="748.9" cy="693.4" r="2"/><circle cx="790.0" cy="732.0" r="2"/><circle cx="831.1" cy="727.0" r="2"/><circle cx="872.2" cy="722.0" r="2"/><circle cx="913.3" cy="700.0" r="2"/><circle cx="954.4" cy="690.0" r="2"/><circle cx="995.5" cy="660.0" r="2"/><circle cx="1036.6" cy="617.4" r="2"/><circle cx="1077.7" cy="647.4" r="2"/><circle cx="1118.8" cy="727.0" r="2"/><circle cx="1159.9" cy="682.4" r="2"/><circle cx="1201.0" cy="686.2" r="2"/></g><path d="M379.00,713.40C392.70,736.70,406.40,760.00,420.10,760.00C433.80,760.00,447.50,758.00,461.20,758.00C474.90,758.00,488.60,762.60,502.30,762.60C516.00,762.60,529.70,762.20,543.40,761.40C557.10,760.60,570.80,692.00,584.50,692.00C598.20,692.00,611.90,733.00,625.60,733.00C639.30,733.00,653.00,719.00,666.70,719.00C680.40,719.00,694.10,759.60,707.80,759.60C721.50,759.60,735.20,747.40,748.90,747.40C762.60,747.40,776.30,755.00,790.00,755.00C803.70,755.00,817.40,750.50,831.10,748.00C844.80,745.50,858.50,745.33,872.20,740.00C885.90,734.67,899.60,661.67,913.30,657.00C927.00,652.33,940.70,654.67,954.40,650.00C968.10,645.33,981.80,637.83,995.50,628.00C1009.20,618.17,1022.90,591.00,1036.60,591.00C1050.30,591.00,1064.00,598.13,1077.70,612.40C1091.40,626.67,1105.10,735.40,1118.80,735.40C1132.50,735.40,1146.20,666.60,1159.90,666.60C1173.60,666.60,1187.30,687.20,1201.00,707.80" stroke="#22c55e" stroke-width="3" stroke-linecap="butt"/><g fill="#fff" stroke="#22c55e" stroke-width="3"><circle cx="379.0" cy="713.4" r="3"/><circle cx="420.1" cy="760.0" r="3"/><circle cx="461.2" cy="758.0" r="3"/><circle cx="502.3" cy="762.6" r="3"/><circle cx="543.4" cy="761.4" r="3"/><circle cx="584.5" cy="692.0" r="3"/><circle cx="625.6" cy="733.0" r="3"/><circle cx="666.7" cy="719.0" r="3"/><circle cx="707.8" cy="759.6" r="3"/><circle cx="748.9" cy="747.4" r="3"/><circle cx="790.0" cy="755.0" r="3"/><circle cx="831.1" cy="748.0" r="3"/><circle cx="872.2" cy="740.0" r="3"/><circle cx="913.3" cy="657.0" r="3"/><circle cx="954.4" cy="650.0" r="3"/><circle cx="995.5" cy="628.0" r="3"/><circle cx="1036.6" cy="591.0" r="3"/><circle cx="1077.7" cy="612.4" r="3"/><circle cx="1118.8" cy="735.4" r="3"/><circle cx="1159.9" cy="666.6" r="3"/><circle cx="1201.0" cy="707.8" r="3"/></g><path d="M379.00,666.00C392.70,700.30,406.40,734.60,420.10,734.60C433.80,734.60,447.50,728.20,461.20,728.20C474.90,728.20,488.60,743.00,502.30,743.00C516.00,743.00,529.70,730.33,543.40,720.00C557.10,709.67,570.80,681.00,584.50,681.00C598.20,681.00,611.90,737.60,625.60,737.60C639.30,737.60,653.00,670.40,666.70,670.40C680.40,670.40,694.10,731.00,707.80,731.00C721.50,731.00,735.20,703.00,748.90,703.00C762.60,703.00,776.30,738.60,790.00,738.60C803.70,738.60,817.40,730.83,831.10,728.40C844.80,725.97,858.50,726.93,872.20,724.00C885.90,721.07,899.60,590.00,913.30,590.00C927.00,590.00,940.70,643.67,954.40,655.00C968.10,666.33,981.80,672.00,995.50,672.00C1009.20,672.00,1022.90,640.40,1036.60,640.40C1050.30,640.40,1064.00,647.70,1077.70,660.40C1091.40,673.10,1105.10,716.60,1118.80,716.60C1132.50,716.60,1146.20,687.80,1159.90,687.80C1173.60,687.80,1187.30,691.00,1201.00,694.20" stroke="#f59e0b" stroke-width="2" stroke-linecap="butt"/><g fill="#fff" stroke="#f59e0b" stroke-width="2"><circle cx="379.0" cy="666.0" r="2.5"/><circle cx="420.1" cy="734.6" r="2.5"/><circle cx="461.2" cy="728.2" r="2.5"/><circle cx="502.3" cy="743.0" r="2.5"/><circle cx="543.4" cy="720.0" r="2.5"/><circle cx="584.5" cy="681.0" r="2.5"/><circle cx="625.6" cy="737.6" r="2.5"/><circle cx="666.7" cy="670.4" r="2.5"/><circle cx="707.8" cy="731.0" r="2.5"/><circle cx="748.9" cy="703.0" r="2.5"/><circle cx="790.0" cy="738.6" r="2.5"/><circle cx="831.1" cy="728.4" r="2.5"/><circle cx="872.2" cy="724.0" r="2.5"/><circle cx="913.3" cy="590.0" r="2.5"/><circle cx="954.4" cy="655.0" r="2.5"/><circle cx="995.5" cy="672.0" r="2.5"/><circle cx="1036.6" cy="640.4" r="2.5"/><circle cx="1077.7" cy="660.4" r="2.5"/><circle cx="1118.8" cy="716.6" r="2.5"/><circle cx="1159.9" cy="687.8" r="2.5"/><circle cx="1201.0" cy="694.2" r="2.5"/></g></svg></div>
<div class="t" style="left:859.00px;top:588.003px;--f:12px;color:#ffffff;--k:1;--ls:-0.015;-webkit-text-stroke:0.31px currentColor;">8<span class="c">月</span>9<span class="c">日</span></div>
<div class="t" style="left:860.00px;top:615.012px;--f:11px;color:#3b82f6;-webkit-text-stroke:0.16px currentColor;"><span class="c">输</span><span class="c">入</span><span class="c">令</span><span class="c">牌</span> : 2.8K tokens</div>
<div class="t" style="left:860.00px;top:635.012px;--f:11px;color:#ec4899;-webkit-text-stroke:0.16px currentColor;"><span class="c">输</span><span class="c">出</span><span class="c">令</span><span class="c">牌</span> : 155.3K tokens</div>
<div class="t" style="left:860.00px;top:655.012px;--f:11px;color:#60a5fa;-webkit-text-stroke:0.16px currentColor;"><span class="c">缓</span><span class="c">存</span><span class="c">写</span><span class="c">入</span> : 4.57M tokens</div>
<div class="t" style="left:860.00px;top:675.012px;--f:11px;color:#a78bfa;-webkit-text-stroke:0.16px currentColor;"><span class="c">缓</span><span class="c">存</span><span class="c">读</span><span class="c">取</span> : 95.12M tokens</div>
<div class="t" style="left:860.00px;top:695.012px;--f:11px;color:#22c55e;-webkit-text-stroke:0.16px currentColor;"><span class="c">成</span><span class="c">本</span> : $240.0021</div>
<div class="t" style="left:860.00px;top:715.012px;--f:11px;color:#f59e0b;-webkit-text-stroke:0.16px currentColor;"><span class="c">请</span><span class="c">求</span><span class="c">数</span> : 947 <span class="c">次</span></div>
</div>
</body></html>
